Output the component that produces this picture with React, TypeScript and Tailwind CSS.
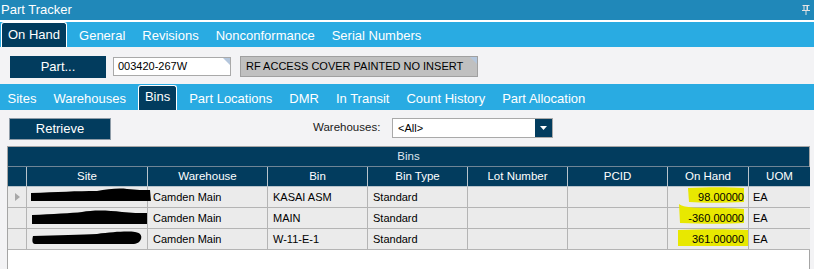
import React from 'react';

const font = "font-['Liberation_Sans',Arial,sans-serif]";

const topTabs = ['On Hand', 'General', 'Revisions', 'Nonconformance', 'Serial Numbers'];
const subTabs = ['Sites', 'Warehouses', 'Bins', 'Part Locations', 'DMR', 'In Transit', 'Count History', 'Part Allocation'];

const columns = ['Site', 'Warehouse', 'Bin', 'Bin Type', 'Lot Number', 'PCID', 'On Hand', 'UOM'];

const rows = [
  { warehouse: 'Camden Main', bin: 'KASAI ASM', type: 'Standard', qty: '98.00000', uom: 'EA' },
  { warehouse: 'Camden Main', bin: 'MAIN', type: 'Standard', qty: '-360.00000', uom: 'EA' },
  { warehouse: 'Camden Main', bin: 'W-11-E-1', type: 'Standard', qty: '361.00000', uom: 'EA' },
];

// hand-drawn marker strokes from the screenshot
const redactions = [
  'M4,5 C30,4 50,3 70,3 C80,1 92,0 100,1 C110,2 116,2 123,2 L124,13 L4,13 Z',
  'M5,6 C25,5 45,4 55,3 C65,1 80,1 95,3 C105,4 112,4 120,4 L120,15 L5,15 Z',
  'M6,6 C30,5 55,5 70,4 C85,2 100,1 108,2 C114,3 115,6 114,9 C113,12 110,14 105,14 L8,14 C5,14 5,10 6,6 Z',
];

const highlights = [
  { d: 'M20,1 C40,0 60,0 76,1 L76,15 C55,16 35,16 21,15 Z', top: 'top-0' },
  { d: 'M11,0 C13,2 20,4 40,4 C55,4 65,4 76,5 L76,19 C60,20 35,20 12,19 Z', top: '-top-[4px]' },
  { d: 'M10,1 C35,0 60,0 80,1 L80,17 C60,17 35,17 10,17 Z', top: 'top-0' },
];

function Tab({ label, active, raise }: { label: string; active: boolean; raise: string }) {
  if (active) {
    return (
      <div className={`h-[25px] flex items-center px-[6px] mx-[3.5px] first:ml-0 bg-[#023c5e] border border-b-0 border-white rounded-t-[3px] text-white ${raise}`}>
        {label}
      </div>
    );
  }
  return <div className="h-full flex items-center px-[8.5px] pt-[3px] text-white whitespace-nowrap">{label}</div>;
}

function PinIcon() {
  return (
    <svg width="8" height="10" viewBox="0 0 8 10" className="block">
      <rect x="0.5" y="0" width="7" height="1" fill="#e3e3e3" />
      <rect x="1.5" y="1" width="1" height="4" fill="#e3e3e3" />
      <rect x="4.5" y="1" width="1.5" height="4" fill="#e3e3e3" />
      <rect x="0" y="5" width="8" height="1" fill="#e3e3e3" />
      <rect x="3.5" y="6" width="1" height="4" fill="#e3e3e3" />
    </svg>
  );
}

function Corner() {
  return (
    <svg width="7" height="7" viewBox="0 0 7 7" className="absolute top-0 right-0">
      <polygon points="0,0 7,0 7,7" fill="#b4c6dc" />
    </svg>
  );
}

export default function App() {
  return (
    <div className={`${font} w-[814px] h-[269px] overflow-hidden bg-[#f3f3f5] flex flex-col`}>
      <div className="shrink-0 h-[20px] bg-[#2088b9] flex items-center justify-between pl-px pr-[4px] pb-px">
        <span className="text-[13px] text-white leading-none">Part Tracker</span>
        <PinIcon />
      </div>
      <div className="shrink-0 h-[2px] bg-white" />

      <div className="shrink-0 h-[25px] bg-[#29abe2] flex items-end pl-px text-[13px]">
        {topTabs.map((t) => (
          <Tab key={t} label={t} active={t === 'On Hand'} raise="pb-px" />
        ))}
      </div>

      <div className="shrink-0 h-[37px] flex items-start pt-[9px] pl-[10px]">
        <button className="w-[96px] h-[22px] bg-[#023c5e] text-white text-[13px] flex items-center justify-center">
          Part...
        </button>
        <div className="relative ml-[7px] mt-px w-[118px] h-[19px] bg-white border border-[#a9a9a9] flex items-center pl-[4px] text-[11px] text-black">
          003420-267W
          <Corner />
        </div>
        <div className="relative ml-[9px] w-[238px] h-[21px] bg-[#c0c0c0] border border-[#a0a0a0] flex items-center pl-[5px] text-[11px] text-black">
          RF ACCESS COVER PAINTED NO INSERT
          <Corner />
        </div>
      </div>

      <div className="shrink-0 h-[26px] bg-[#29abe2] text-[13px]">
        <div className="h-full flex items-end -ml-px">
          {subTabs.map((t) => (
            <Tab key={t} label={t} active={t === 'Bins'} raise="pb-[3px]" />
          ))}
        </div>
      </div>

      <div className="shrink-0 pt-[8px]">
        <div className="flex items-center">
          <button className="ml-[9px] w-[102px] h-[22px] bg-[#023c5e] border border-[#8e9ca8] text-white text-[13px] flex items-center justify-center">
            Retrieve
          </button>
          <div className="ml-[202px] w-[79px] text-[11.5px] text-[#1a1a1a] pb-[2px]">Warehouses:</div>
          <div className="mb-[2px] w-[161px] h-[20px] bg-white border border-[#a9a9a9] flex items-center text-[11px] text-black">
            <span className="flex-1 pl-[5px]">&lt;All&gt;</span>
            <div className="w-[17px] h-full bg-[#023c5e] flex items-center justify-center">
              <svg width="7" height="4" viewBox="0 0 7 4">
                <polygon points="0,0 7,0 3.5,4" fill="#ffffff" />
              </svg>
            </div>
          </div>
        </div>

        <div className="mt-[6px] ml-[7px] w-[803px] h-[140px] bg-white border border-[#a5a5a5]">
          <div className="h-[20px] bg-[#023c5e] border-b border-[#6f8596] flex items-center justify-center text-[11.5px] text-[#dfe7ee]">
            Bins
          </div>
          <div className="grid grid-cols-[19px_121px_120px_100px_100px_100px_100px_81px_61px]">
            <div className="h-[20px] bg-[#023c5e] border-r border-b border-[#b8c4cc]" />
            {columns.map((c, i) => (
              <div
                key={c}
                className={`h-[20px] bg-[#023c5e] border-b border-[#b8c4cc] flex items-center justify-center text-[11.5px] text-white ${i < columns.length - 1 ? 'border-r' : ''}`}
              >
                {c}
              </div>
            ))}

            {rows.map((r, i) => (
              <React.Fragment key={i}>
                <div className="h-[21px] bg-[#ebebeb] border-r border-b border-[#b4b4b4] flex items-center pl-[7px]">
                  {i === 0 && (
                    <svg width="5" height="8" viewBox="0 0 5 8">
                      <polygon points="0,0 5,4 0,8" fill="#a8a8a8" />
                    </svg>
                  )}
                </div>
                <div className="relative h-[21px] bg-[#ebebeb] border-r border-b border-[#b4b4b4]">
                  <svg width="126" height="18" viewBox="0 0 126 18" className="absolute left-0 top-px overflow-visible">
                    <path d={redactions[i]} fill="#000000" />
                  </svg>
                </div>
                <div className="h-[21px] bg-[#ebebeb] border-r border-b border-[#b4b4b4] flex items-center pl-[5px] text-[11px] text-black">
                  {r.warehouse}
                </div>
                <div className="h-[21px] bg-[#ebebeb] border-r border-b border-[#b4b4b4] flex items-center pl-[5px] text-[11px] text-black">
                  {r.bin}
                </div>
                <div className="h-[21px] bg-[#ebebeb] border-r border-b border-[#b4b4b4] flex items-center pl-[5px] text-[11px] text-black">
                  {r.type}
                </div>
                <div className="h-[21px] bg-[#ebebeb] border-r border-b border-[#b4b4b4]" />
                <div className="h-[21px] bg-[#ebebeb] border-r border-b border-[#b4b4b4]" />
                <div className="relative h-[21px] bg-[#ebebeb] border-r border-b border-[#b4b4b4] flex items-center justify-end pr-[4px] text-[11px] text-black">
                  <svg width="81" height="21" viewBox="0 0 81 21" className={`absolute left-0 ${highlights[i].top} overflow-visible`}>
                    <path d={highlights[i].d} fill="#e8e800" />
                  </svg>
                  <span className="relative">{r.qty}</span>
                </div>
                <div className="h-[21px] bg-[#ebebeb] border-b border-[#b4b4b4] flex items-center pl-[4px] text-[11px] text-black">
                  {r.uom}
                </div>
              </React.Fragment>
            ))}
          </div>
        </div>
      </div>
    </div>
  );
}
